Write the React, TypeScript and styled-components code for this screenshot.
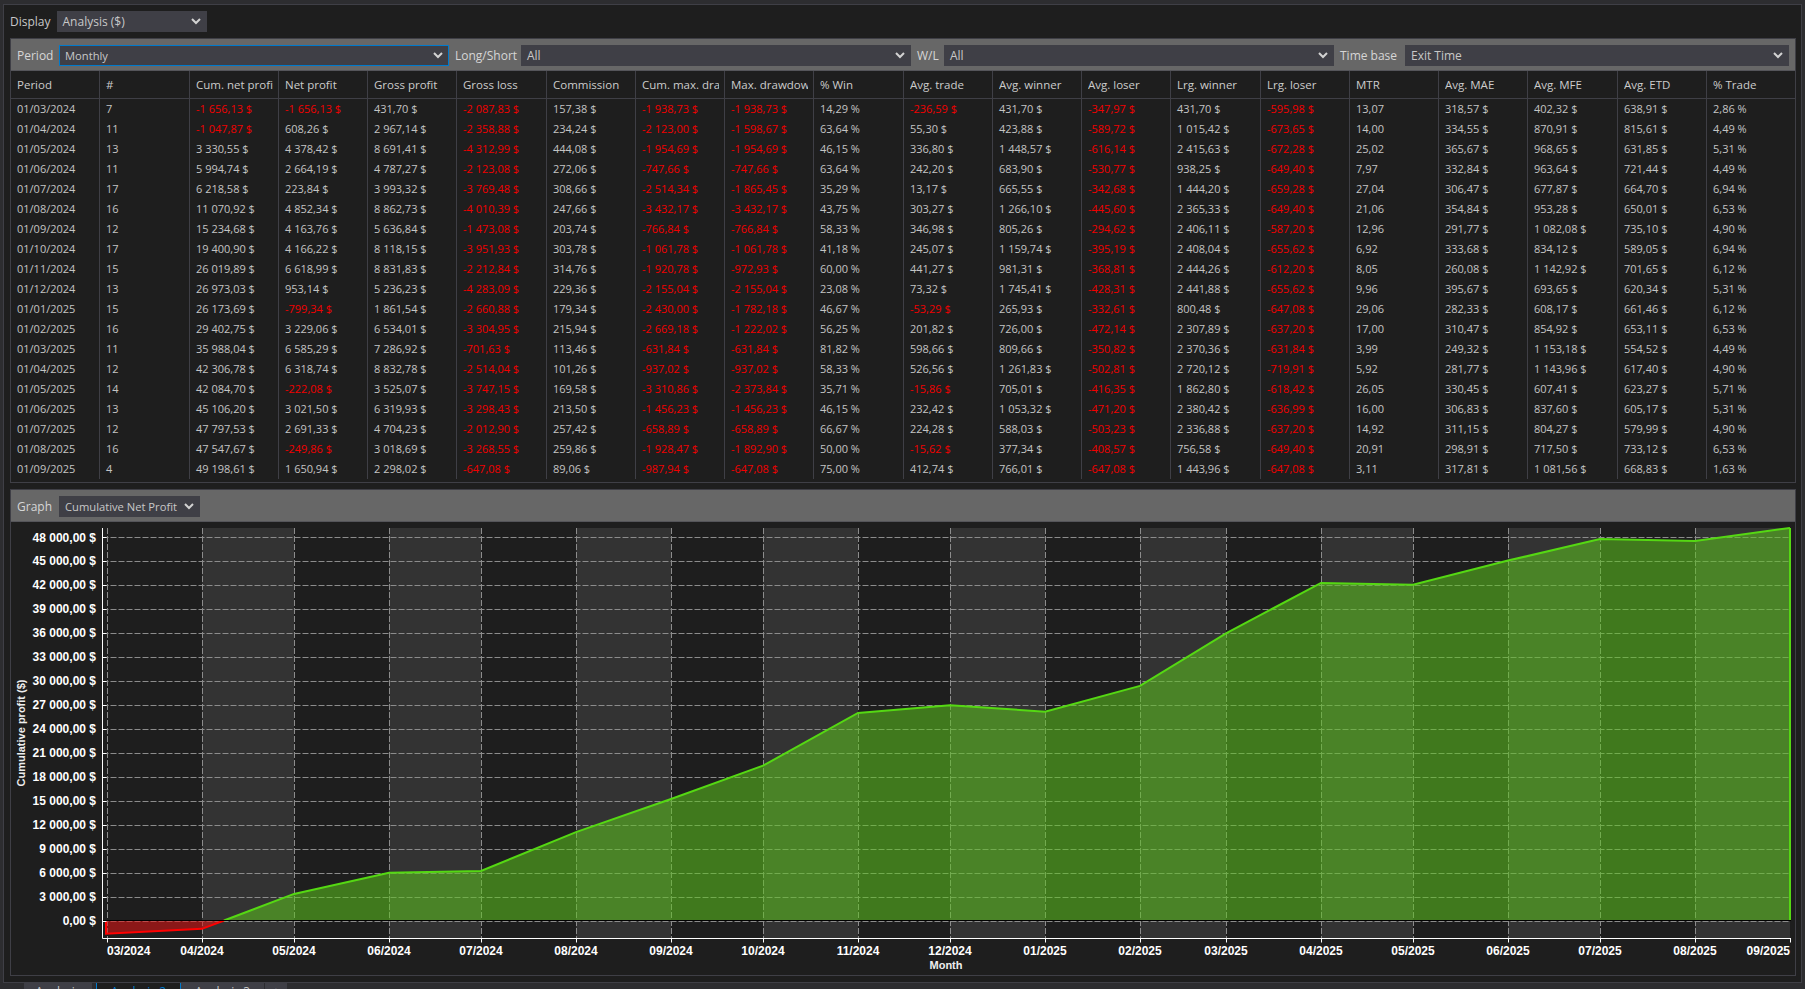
import styled, { createGlobalStyle } from 'styled-components';

const GlobalStyle = createGlobalStyle`
  html, body {
    margin: 0;
    height: 989px;
    overflow: hidden;
    background: #2d2d30;
  }
  #root {
    height: 989px;
  }
`;

const uiFont = `"Open Sans", "Noto Sans", sans-serif`;
const chartFont = `"Liberation Sans", Arial, sans-serif`;

const Screen = styled.div`
  height: 989px;
  padding-top: 4px;
  box-sizing: border-box;
  display: flex;
  flex-direction: column;
  font-family: ${uiFont};
  color: #c8c8c8;
`;

const Panel = styled.div`
  height: 979px;
  box-sizing: border-box;
  margin: 0 3px;
  border: 1px solid #3f3f46;
  background: #1e1e1e;
  padding: 6px 5px 6px 6px;
  display: flex;
  flex-direction: column;
  gap: 6px;
  flex-shrink: 0;
`;

const DisplayRow = styled.div`
  display: flex;
  align-items: center;
  gap: 6px;
  height: 21px;
  font-size: 12px;
`;

const Box = styled.section<{ $fill?: boolean }>`
  border: 1px solid #3f3f46;
  display: flex;
  flex-direction: column;
  flex: ${(p) => (p.$fill ? '1' : '0 0 auto')};
  min-height: 0;
`;

const Strip = styled.div`
  height: 32px;
  box-sizing: border-box;
  padding: 6px 6px 5px;
  background: #676767;
  border-bottom: 1px solid #55555a;
  display: flex;
  align-items: center;
  gap: 6px;
  font-size: 12px;
  color: #d6d6d6;
`;

const Label = styled.span<{ $width?: number }>`
  white-space: nowrap;
  line-height: 21px;
  ${(p) => (p.$width ? `width: ${p.$width}px; flex: none;` : '')}
`;

const Select = styled.div<{ $width: number; $focus?: boolean; $small?: boolean }>`
  width: ${(p) => p.$width}px;
  flex: none;
  height: 21px;
  box-sizing: border-box;
  display: flex;
  align-items: center;
  justify-content: space-between;
  padding: 0 5px;
  background: #3f3f46;
  border: 1px solid ${(p) => (p.$focus ? '#007acc' : '#3f3f46')};
  color: #c8c8c8;
  font-size: ${(p) => (p.$small ? '11.2px' : '12px')};
  white-space: nowrap;
`;

const ChevronIcon = styled.svg`
  width: 10px;
  height: 7px;
  flex: none;
`;

const Chevron = () => (
  <ChevronIcon viewBox="0 0 10 7">
    <path d="M1 1 L5 5 L9 1" fill="none" stroke="#d2d2d2" strokeWidth="2" />
  </ChevronIcon>
);

const columnWidths = [89, 90, 89, 89, 89, 90, 89, 89, 89, 90, 89, 89, 89, 90, 89, 89, 89, 90, 89, 88];

const Table = styled.div`
  display: grid;
  grid-template-columns: ${columnWidths.map((w) => `${w}px`).join(' ')};
  padding-bottom: 3px;
`;

const HeadCell = styled.div<{ $last: boolean }>`
  height: 28px;
  box-sizing: border-box;
  padding: 0 5px 0 6px;
  line-height: 27px;
  font-size: 11.5px;
  color: #cccccc;
  border-bottom: 1px solid #3f3f46;
  border-right: ${(p) => (p.$last ? 'none' : '1px solid #3f3f46')};
`;

const HeadText = styled.span`
  display: block;
  white-space: nowrap;
  overflow: hidden;
`;

const Cell = styled.div<{ $neg: boolean; $last: boolean }>`
  height: 20px;
  box-sizing: border-box;
  padding: 0 0 0 6px;
  line-height: 20px;
  font-size: 11px;
  white-space: nowrap;
  overflow: hidden;
  color: ${(p) => (p.$neg ? '#f00000' : '#c4c4c4')};
  border-right: ${(p) => (p.$last ? 'none' : '1px solid #3f3f46')};
`;

const ChartSvg = styled.svg`
  display: block;
  flex: 1;
  width: 100%;
  min-height: 0;
  font-family: ${chartFont};
`;

const Tabs = styled.div`
  height: 6px;
  overflow: hidden;
  padding: 0 0 0 24px;
  display: flex;
  font-size: 12px;
`;

const Tab = styled.div<{ $active?: boolean; $width: number }>`
  width: ${(p) => p.$width}px;
  flex: none;
  box-sizing: border-box;
  height: 22px;
  line-height: 17px;
  text-align: center;
  background: ${(p) => (p.$active ? '#1e1e1e' : '#3f3f46')};
  color: ${(p) => (p.$active ? '#007acc' : '#c8c8c8')};
  border-left: ${(p) => (p.$active ? '1px solid #007acc' : 'none')};
  border-right: 1px solid ${(p) => (p.$active ? '#007acc' : '#2d2d30')};
`;

const TabGap = styled.div`
  width: 3px;
  flex: none;
`;

const headers = [
  'Period', '#', 'Cum. net profit', 'Net profit', 'Gross profit', 'Gross loss', 'Commission',
  'Cum. max. drawdown', 'Max. drawdown', '% Win', 'Avg. trade', 'Avg. winner', 'Avg. loser',
  'Lrg. winner', 'Lrg. loser', 'MTR', 'Avg. MAE', 'Avg. MFE', 'Avg. ETD', '% Trade',
];

const rows = [
  '01/03/2024|7|-1 656,13 $|-1 656,13 $|431,70 $|-2 087,83 $|157,38 $|-1 938,73 $|-1 938,73 $|14,29 %|-236,59 $|431,70 $|-347,97 $|431,70 $|-595,98 $|13,07|318,57 $|402,32 $|638,91 $|2,86 %',
  '01/04/2024|11|-1 047,87 $|608,26 $|2 967,14 $|-2 358,88 $|234,24 $|-2 123,00 $|-1 598,67 $|63,64 %|55,30 $|423,88 $|-589,72 $|1 015,42 $|-673,65 $|14,00|334,55 $|870,91 $|815,61 $|4,49 %',
  '01/05/2024|13|3 330,55 $|4 378,42 $|8 691,41 $|-4 312,99 $|444,08 $|-1 954,69 $|-1 954,69 $|46,15 %|336,80 $|1 448,57 $|-616,14 $|2 415,63 $|-672,28 $|25,02|365,67 $|968,65 $|631,85 $|5,31 %',
  '01/06/2024|11|5 994,74 $|2 664,19 $|4 787,27 $|-2 123,08 $|272,06 $|-747,66 $|-747,66 $|63,64 %|242,20 $|683,90 $|-530,77 $|938,25 $|-649,40 $|7,97|332,84 $|963,64 $|721,44 $|4,49 %',
  '01/07/2024|17|6 218,58 $|223,84 $|3 993,32 $|-3 769,48 $|308,66 $|-2 514,34 $|-1 865,45 $|35,29 %|13,17 $|665,55 $|-342,68 $|1 444,20 $|-659,28 $|27,04|306,47 $|677,87 $|664,70 $|6,94 %',
  '01/08/2024|16|11 070,92 $|4 852,34 $|8 862,73 $|-4 010,39 $|247,66 $|-3 432,17 $|-3 432,17 $|43,75 %|303,27 $|1 266,10 $|-445,60 $|2 365,33 $|-649,40 $|21,06|354,84 $|953,28 $|650,01 $|6,53 %',
  '01/09/2024|12|15 234,68 $|4 163,76 $|5 636,84 $|-1 473,08 $|203,74 $|-766,84 $|-766,84 $|58,33 %|346,98 $|805,26 $|-294,62 $|2 406,11 $|-587,20 $|12,96|291,77 $|1 082,08 $|735,10 $|4,90 %',
  '01/10/2024|17|19 400,90 $|4 166,22 $|8 118,15 $|-3 951,93 $|303,78 $|-1 061,78 $|-1 061,78 $|41,18 %|245,07 $|1 159,74 $|-395,19 $|2 408,04 $|-655,62 $|6,92|333,68 $|834,12 $|589,05 $|6,94 %',
  '01/11/2024|15|26 019,89 $|6 618,99 $|8 831,83 $|-2 212,84 $|314,76 $|-1 920,78 $|-972,93 $|60,00 %|441,27 $|981,31 $|-368,81 $|2 444,26 $|-612,20 $|8,05|260,08 $|1 142,92 $|701,65 $|6,12 %',
  '01/12/2024|13|26 973,03 $|953,14 $|5 236,23 $|-4 283,09 $|229,36 $|-2 155,04 $|-2 155,04 $|23,08 %|73,32 $|1 745,41 $|-428,31 $|2 441,88 $|-655,62 $|9,96|395,67 $|693,65 $|620,34 $|5,31 %',
  '01/01/2025|15|26 173,69 $|-799,34 $|1 861,54 $|-2 660,88 $|179,34 $|-2 430,00 $|-1 782,18 $|46,67 %|-53,29 $|265,93 $|-332,61 $|800,48 $|-647,08 $|29,06|282,33 $|608,17 $|661,46 $|6,12 %',
  '01/02/2025|16|29 402,75 $|3 229,06 $|6 534,01 $|-3 304,95 $|215,94 $|-2 669,18 $|-1 222,02 $|56,25 %|201,82 $|726,00 $|-472,14 $|2 307,89 $|-637,20 $|17,00|310,47 $|854,92 $|653,11 $|6,53 %',
  '01/03/2025|11|35 988,04 $|6 585,29 $|7 286,92 $|-701,63 $|113,46 $|-631,84 $|-631,84 $|81,82 %|598,66 $|809,66 $|-350,82 $|2 370,36 $|-631,84 $|3,99|249,32 $|1 153,18 $|554,52 $|4,49 %',
  '01/04/2025|12|42 306,78 $|6 318,74 $|8 832,78 $|-2 514,04 $|101,26 $|-937,02 $|-937,02 $|58,33 %|526,56 $|1 261,83 $|-502,81 $|2 720,12 $|-719,91 $|5,92|281,77 $|1 143,96 $|617,40 $|4,90 %',
  '01/05/2025|14|42 084,70 $|-222,08 $|3 525,07 $|-3 747,15 $|169,58 $|-3 310,86 $|-2 373,84 $|35,71 %|-15,86 $|705,01 $|-416,35 $|1 862,80 $|-618,42 $|26,05|330,45 $|607,41 $|623,27 $|5,71 %',
  '01/06/2025|13|45 106,20 $|3 021,50 $|6 319,93 $|-3 298,43 $|213,50 $|-1 456,23 $|-1 456,23 $|46,15 %|232,42 $|1 053,32 $|-471,20 $|2 380,42 $|-636,99 $|16,00|306,83 $|837,60 $|605,17 $|5,31 %',
  '01/07/2025|12|47 797,53 $|2 691,33 $|4 704,23 $|-2 012,90 $|257,42 $|-658,89 $|-658,89 $|66,67 %|224,28 $|588,03 $|-503,23 $|2 336,88 $|-637,20 $|14,92|311,15 $|804,27 $|579,99 $|4,90 %',
  '01/08/2025|16|47 547,67 $|-249,86 $|3 018,69 $|-3 268,55 $|259,86 $|-1 928,47 $|-1 892,90 $|50,00 %|-15,62 $|377,34 $|-408,57 $|756,58 $|-649,40 $|20,91|298,91 $|717,50 $|733,12 $|6,53 %',
  '01/09/2025|4|49 198,61 $|1 650,94 $|2 298,02 $|-647,08 $|89,06 $|-987,94 $|-647,08 $|75,00 %|412,74 $|766,01 $|-647,08 $|1 443,96 $|-647,08 $|3,11|317,81 $|1 081,56 $|668,83 $|1,63 %',
].map((r) => r.split('|'));

// chart coordinates are page pixels shifted by the svg origin
const OX = 11;
const OY = 522;
const monthX = [107, 202, 294, 389, 481, 576, 671, 763, 858, 950, 1045, 1140, 1226, 1321, 1413, 1508, 1600, 1695, 1790].map((x) => x - OX);
const monthLabels = [
  '03/2024', '04/2024', '05/2024', '06/2024', '07/2024', '08/2024', '09/2024', '10/2024', '11/2024', '12/2024',
  '01/2025', '02/2025', '03/2025', '04/2025', '05/2025', '06/2025', '07/2025', '08/2025', '09/2025',
];
const cumulative = rows.map((r) => parseFloat(r[2].replace(/ /g, '').replace(',', '.').replace('$', '')));

const ZERO = 920.5 - OY;
const valueY = (v: number) => ZERO - v * (383 / 48000);
const AXIS_X = 102.5 - OX;
const TOP = 528 - OY;
const BOTTOM = 938.5 - OY;

const yTicks = Array.from({ length: 17 }, (_, i) => i * 3000);
const formatTick = (v: number) => {
  if (v === 0) return '0,00 $';
  const k = Math.floor(v / 1000);
  return `${k} 000,00 $`;
};

const crossX = monthX[1] + ((monthX[2] - monthX[1]) * -cumulative[1]) / (cumulative[2] - cumulative[1]);
const greenPts: [number, number][] = [[crossX, ZERO]];
for (let i = 2; i < monthX.length; i++) greenPts.push([monthX[i], valueY(cumulative[i])]);
const greenLine = greenPts.map(([x, y]) => `${x},${y}`).join(' ');
const lastX = monthX[monthX.length - 1];
const greenArea = `${greenLine} ${lastX},${ZERO}`;
const redLine = `${monthX[0] - 1},${ZERO} ${monthX[0] - 1},${valueY(cumulative[0])} ${monthX[1]},${valueY(cumulative[1])} ${crossX},${ZERO}`;

const Chart = () => (
  <ChartSvg viewBox="0 0 1784 453" preserveAspectRatio="none">
    {monthX.slice(0, -1).map((x, i) =>
      i % 2 === 1 ? <rect key={x} x={x} y={TOP} width={monthX[i + 1] - x} height={BOTTOM - TOP} fill="#333333" /> : null,
    )}
    {monthX.slice(0, -1).map((x) => (
      <line key={x} x1={x + 0.5} x2={x + 0.5} y1={TOP} y2={BOTTOM} stroke="#8c8c8c" strokeDasharray="6 2" />
    ))}
    {yTicks.map((v) => (
      <line key={v} x1={AXIS_X} x2={lastX} y1={Math.round(valueY(v)) + 0.5} y2={Math.round(valueY(v)) + 0.5} stroke="#8c8c8c" strokeDasharray="6 2" />
    ))}
    <polygon points={redLine} fill="rgb(230,20,20)" fillOpacity="0.55" />
    <polygon points={greenArea} fill="rgb(92,197,30)" fillOpacity="0.55" />
    <polyline points={redLine} fill="none" stroke="#ff0000" strokeWidth="2" />
    <polyline points={greenLine} fill="none" stroke="#55d813" strokeWidth="2" />
    <line x1={lastX} x2={lastX} y1={valueY(cumulative[18])} y2={ZERO} stroke="#55d813" strokeWidth="2" />
    <line x1={AXIS_X} x2={lastX + 1} y1={ZERO} y2={ZERO} stroke="#000000" />
    <line x1={AXIS_X} x2={AXIS_X} y1={TOP} y2={BOTTOM} stroke="#ffffff" />
    <line x1={AXIS_X} x2={lastX + 1} y1={BOTTOM} y2={BOTTOM} stroke="#ffffff" />
    {yTicks.map((v) => (
      <g key={v}>
        <line x1={AXIS_X} x2={AXIS_X + 4} y1={Math.round(valueY(v)) + 0.5} y2={Math.round(valueY(v)) + 0.5} stroke="#ffffff" />
        <text x={96 - OX} y={valueY(v) + 4} textAnchor="end" fontSize="12" fontWeight="700" fill="#ffffff">
          {formatTick(v)}
        </text>
      </g>
    ))}
    {monthX.map((x, i) => (
      <g key={x}>
        <line x1={x + 0.5} x2={x + 0.5} y1={BOTTOM} y2={BOTTOM + 4} stroke="#ffffff" />
        <text
          x={x}
          y={955 - OY}
          textAnchor={i === 0 ? 'start' : i === monthX.length - 1 ? 'end' : 'middle'}
          fontSize="12"
          fontWeight="700"
          fill="#ffffff"
        >
          {monthLabels[i]}
        </text>
      </g>
    ))}
    <text x={946 - OX} y={969 - OY} textAnchor="middle" fontSize="11" fontWeight="700" fill="#eeeeee">
      Month
    </text>
    <text transform={`translate(${25 - OX} ${733 - OY}) rotate(-90)`} textAnchor="middle" fontSize="11" fontWeight="700" fill="#eeeeee">
      Cumulative profit ($)
    </text>
  </ChartSvg>
);

export default function App() {
  return (
    <Screen>
      <GlobalStyle />
      <Panel>
        <DisplayRow>
          <Label>Display</Label>
          <Select $width={150}>
            Analysis ($)
            <Chevron />
          </Select>
        </DisplayRow>

        <Box>
          <Strip>
            <Label $width={36}>Period</Label>
            <Select $focus $small $width={390}>
              Monthly
              <Chevron />
            </Select>
            <Label $width={60}>Long/Short</Label>
            <Select $width={390}>
              All
              <Chevron />
            </Select>
            <Label $width={21}>W/L</Label>
            <Select $width={390}>
              All
              <Chevron />
            </Select>
            <Label $width={59}>Time base</Label>
            <Select $width={384}>
              Exit Time
              <Chevron />
            </Select>
          </Strip>
          <Table>
            {headers.map((h, i) => (
              <HeadCell key={h} $last={i === headers.length - 1}>
                <HeadText>{h}</HeadText>
              </HeadCell>
            ))}
            {rows.map((row) =>
              row.map((value, i) => (
                <Cell key={`${row[0]}-${i}`} $neg={value.startsWith('-')} $last={i === row.length - 1}>
                  {value}
                </Cell>
              )),
            )}
          </Table>
        </Box>

        <Box $fill>
          <Strip>
            <Label $width={36}>Graph</Label>
            <Select $small $width={141}>
              Cumulative Net Profit
              <Chevron />
            </Select>
          </Strip>
          <Chart />
        </Box>
      </Panel>
      <Tabs>
        <Tab $width={69}>Analysis</Tab>
        <TabGap />
        <Tab $active $width={85}>Analysis 2</Tab>
        <Tab $width={84}>Analysis 3</Tab>
        <Tab $width={23}>+</Tab>
      </Tabs>
    </Screen>
  );
}
